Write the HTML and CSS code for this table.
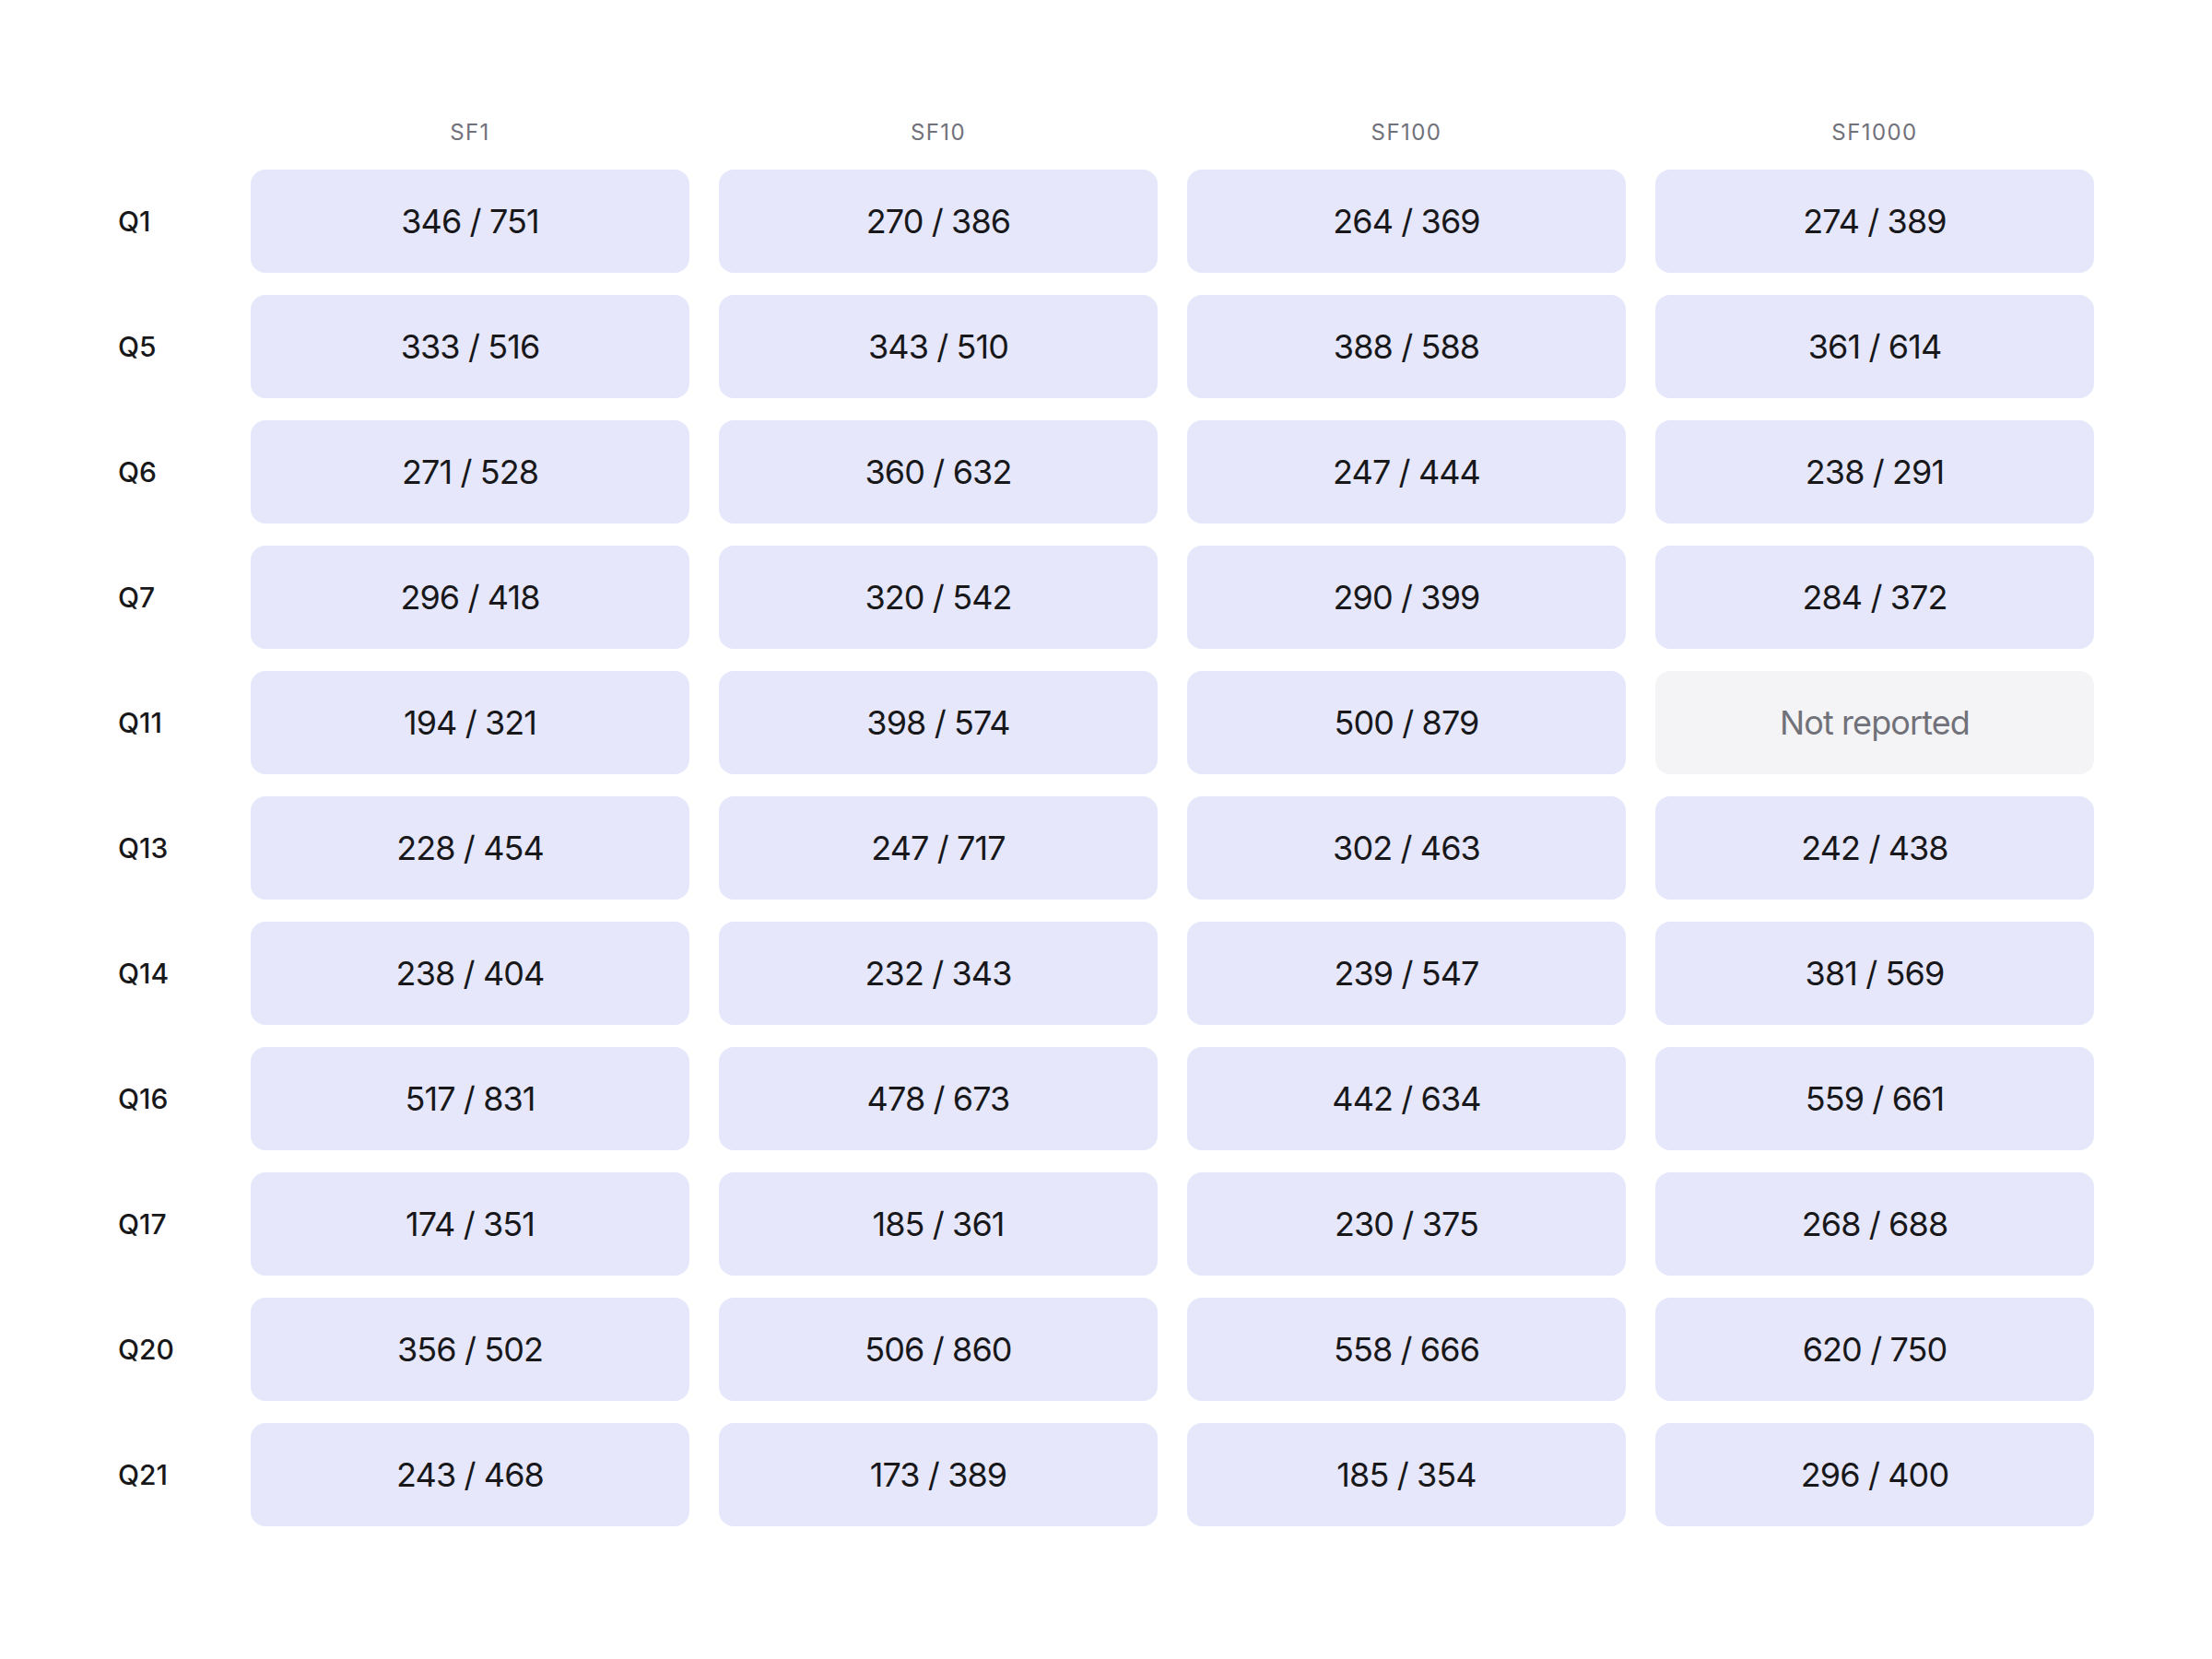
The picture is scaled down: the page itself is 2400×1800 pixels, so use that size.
FILE: index.html
```html
<!DOCTYPE html>
<html lang="en">
<head>
<meta charset="utf-8">
<title>Query timings</title>
<link rel="stylesheet" href="styles.css">
</head>
<body>
<main class="page">
  <div class="grid">
    <div class="corner"></div>
    <div class="col-head">SF1</div>
    <div class="col-head">SF10</div>
    <div class="col-head">SF100</div>
    <div class="col-head">SF1000</div>

    <div class="row-head">Q1</div>
    <div class="cell">346 / 751</div><div class="cell">270 / 386</div><div class="cell">264 / 369</div><div class="cell">274 / 389</div>

    <div class="row-head">Q5</div>
    <div class="cell">333 / 516</div><div class="cell">343 / 510</div><div class="cell">388 / 588</div><div class="cell">361 / 614</div>

    <div class="row-head">Q6</div>
    <div class="cell">271 / 528</div><div class="cell">360 / 632</div><div class="cell">247 / 444</div><div class="cell">238 / 291</div>

    <div class="row-head">Q7</div>
    <div class="cell">296 / 418</div><div class="cell">320 / 542</div><div class="cell">290 / 399</div><div class="cell">284 / 372</div>

    <div class="row-head">Q11</div>
    <div class="cell">194 / 321</div><div class="cell">398 / 574</div><div class="cell">500 / 879</div><div class="cell empty">Not reported</div>

    <div class="row-head">Q13</div>
    <div class="cell">228 / 454</div><div class="cell">247 / 717</div><div class="cell">302 / 463</div><div class="cell">242 / 438</div>

    <div class="row-head">Q14</div>
    <div class="cell">238 / 404</div><div class="cell">232 / 343</div><div class="cell">239 / 547</div><div class="cell">381 / 569</div>

    <div class="row-head">Q16</div>
    <div class="cell">517 / 831</div><div class="cell">478 / 673</div><div class="cell">442 / 634</div><div class="cell">559 / 661</div>

    <div class="row-head">Q17</div>
    <div class="cell">174 / 351</div><div class="cell">185 / 361</div><div class="cell">230 / 375</div><div class="cell">268 / 688</div>

    <div class="row-head">Q20</div>
    <div class="cell">356 / 502</div><div class="cell">506 / 860</div><div class="cell">558 / 666</div><div class="cell">620 / 750</div>

    <div class="row-head">Q21</div>
    <div class="cell">243 / 468</div><div class="cell">173 / 389</div><div class="cell">185 / 354</div><div class="cell">296 / 400</div>
  </div>
</main>
</body>
</html>
```

FILE: styles.css
```css
* { box-sizing: border-box; }

html, body {
  margin: 0;
  background: #ffffff;
}

body {
  font-family: Inter, "Noto Sans", "Liberation Sans", sans-serif;
  color: #18181b;
}

.page {
  padding: 128px 128px 0 128px;
}

.grid {
  display: grid;
  grid-template-columns: 112px repeat(4, 1fr);
  column-gap: 32px;
  row-gap: 24px;
  align-items: center;
}

.col-head {
  text-align: center;
  font-size: 24px;
  line-height: 32px;
  letter-spacing: 0.06em;
  color: #71717a;
}

.row-head {
  font-size: 30px;
  font-weight: 500;
  color: #18181b;
}

.cell {
  height: 112px;
  border-radius: 16px;
  background: #e6e7fb;
  display: flex;
  align-items: center;
  justify-content: center;
  font-size: 36px;
  letter-spacing: -0.025em;
  color: #18181b;
}

.cell.empty {
  background: #f4f4f6;
  color: #71717a;
}
```
